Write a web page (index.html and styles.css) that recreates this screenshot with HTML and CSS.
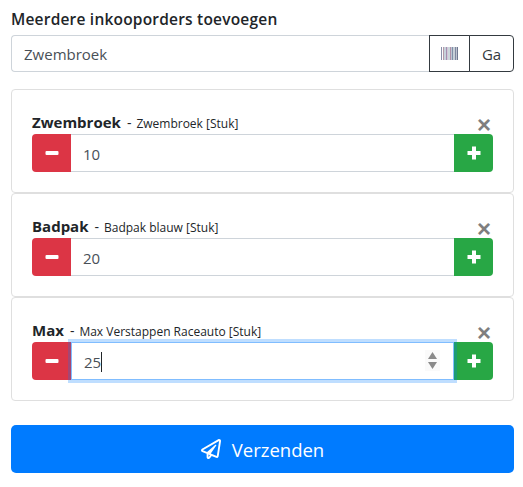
FILE: index.html
```html
<!DOCTYPE html>
<html lang="nl">
<head>
<meta charset="utf-8">
<title>Meerdere inkooporders toevoegen</title>
<link rel="stylesheet" href="styles.css">
</head>
<body>
<form class="page">
  <label class="heading" for="search">Meerdere inkooporders toevoegen</label>
  <div class="search-group">
    <input class="search-input" id="search" value="Zwembroek">
    <button type="button" class="outline-btn barcode-btn" aria-label="Barcode">
      <svg class="barcode" width="17" height="13" viewBox="0 0 17 13">
        <rect x="0" width="1" height="13" fill="#8a8fa8"/><rect x="2" width="1" height="13" fill="#b49aa8"/><rect x="3.5" width="1" height="13" fill="#8fa6b8"/><rect x="5" width="1.5" height="13" fill="#a58fb0"/><rect x="7.5" width="1" height="13" fill="#9ab0b8"/><rect x="9" width="1" height="13" fill="#b090a8"/><rect x="10.5" width="1.5" height="13" fill="#7f8fa8"/><rect x="12.5" width="1" height="13" fill="#90a0b0"/><rect x="14" width="1.5" height="13" fill="#7f88a0"/><rect x="16" width="1" height="13" fill="#6f7890"/>
      </svg>
    </button>
    <button type="button" class="outline-btn ga-btn">Ga</button>
  </div>
  <div class="cards">
    <section class="card">
      <button type="button" class="close" aria-label="Sluiten">&times;</button>
      <div class="title"><strong>Zwembroek</strong><span class="dash">-</span><small>Zwembroek [Stuk]</small></div>
      <div class="qty-group">
        <button type="button" class="step minus" aria-label="Min"><svg width="14" height="14" viewBox="0 0 14 14"><rect x="0.5" y="5" width="13" height="4" rx="1" fill="#fff"/></svg></button>
        <input class="qty" type="text" value="10">
        <button type="button" class="step plus" aria-label="Plus"><svg width="14" height="14" viewBox="0 0 14 14"><path d="M5 0.500h4v4.500h4.500v4h-4.500v4.500h-4v-4.500h-4.500v-4h4.500z" fill="#fff"/></svg></button>
      </div>
    </section>
    <section class="card">
      <button type="button" class="close" aria-label="Sluiten">&times;</button>
      <div class="title"><strong>Badpak</strong><span class="dash">-</span><small>Badpak blauw [Stuk]</small></div>
      <div class="qty-group">
        <button type="button" class="step minus" aria-label="Min"><svg width="14" height="14" viewBox="0 0 14 14"><rect x="0.5" y="5" width="13" height="4" rx="1" fill="#fff"/></svg></button>
        <input class="qty" type="text" value="20">
        <button type="button" class="step plus" aria-label="Plus"><svg width="14" height="14" viewBox="0 0 14 14"><path d="M5 0.500h4v4.500h4.500v4h-4.500v4.500h-4v-4.500h-4.500v-4h4.500z" fill="#fff"/></svg></button>
      </div>
    </section>
    <section class="card">
      <button type="button" class="close" aria-label="Sluiten">&times;</button>
      <div class="title"><strong>Max</strong><span class="dash">-</span><small>Max Verstappen Raceauto [Stuk]</small></div>
      <div class="qty-group">
        <button type="button" class="step minus" aria-label="Min"><svg width="14" height="14" viewBox="0 0 14 14"><rect x="0.5" y="5" width="13" height="4" rx="1" fill="#fff"/></svg></button>
        <div class="qty focused">
          <span class="value">25</span><span class="caret"></span>
          <svg class="spinner" width="15" height="21" viewBox="0 0 15 21"><path d="M7.500 2L12 9H3z" fill="#8a8a8a"/><path d="M7.500 19L3 12H12z" fill="#8a8a8a"/></svg>
        </div>
        <button type="button" class="step plus" aria-label="Plus"><svg width="14" height="14" viewBox="0 0 14 14"><path d="M5 0.500h4v4.500h4.500v4h-4.500v4.500h-4v-4.500h-4.500v-4h4.500z" fill="#fff"/></svg></button>
      </div>
    </section>
  </div>
  <button type="button" class="submit">
    <svg width="20" height="20" viewBox="0 0 512 512"><path fill="#fff" d="M440 6.500L24 246.400c-34.400 19.900-31.100 70.800 5.700 85.900L144 379.600V464c0 46.400 59.200 65.500 86.600 28.600l43.800-59.100 111.900 46.200c5.900 2.400 12.100 3.600 18.300 3.600 8.200 0 16.300-2.100 23.600-6.200 12.800-7.200 21.600-20 23.900-34.500l59.400-387.200c6.100-40.100-36.900-68.800-71.500-48.900zM192 464v-64.600l36.600 15.100L192 464zm212.600-28.700l-153.800-63.500L391 169.500c10.700-15.500-9.500-33.500-23.700-21.200L155.800 332.600 48 288 464 48l-59.400 387.300z"/></svg>
    <span>Verzenden</span>
  </button>
</form>
</body>
</html>
```
FILE: styles.css
```css
* {
  box-sizing: border-box;
}

html, body {
  margin: 0;
  padding: 0;
  background: #fff;
}

body {
  font-family: "Open Sans", "Noto Sans", sans-serif;
  color: #212529;
  font-size: 15px;
}

.page {
  display: flex;
  flex-direction: column;
  width: 523px;
  height: 487px;
  padding: 9px 9px 0 11px;
}

.heading {
  font-size: 15.500px;
  font-weight: 600;
  line-height: 21px;
  height: 26px;
  letter-spacing: 0.200px;
  white-space: nowrap;
}

.search-group {
  display: flex;
  height: 37px;
}

.search-input {
  flex: 1;
  min-width: 0;
  height: 37px;
  border: 1px solid #ced4da;
  border-right: 0;
  border-radius: 4px 0 0 4px;
  padding: 1px 12px 0;
  font: 15px "Open Sans", sans-serif;
  color: #495057;
  outline: 0;
}

.outline-btn {
  height: 37px;
  background: #fff;
  border: 1px solid #343a40;
  color: #343a40;
  font: 15px "Open Sans", sans-serif;
  padding: 0;
  display: flex;
  align-items: center;
  justify-content: center;
}

.barcode-btn {
  width: 41px;
}

.ga-btn {
  width: 45px;
  margin-left: -1px;
  border-radius: 0 4px 4px 0;
}

.cards {
  display: flex;
  flex-direction: column;
  margin-top: 17px;
}

.card {
  position: relative;
  height: 104px;
  border: 1px solid #dfdfdf;
  border-radius: 4px;
  padding: 20px 20px 0;
}

.close {
  position: absolute;
  top: 22px;
  right: 20px;
  width: 18px;
  height: 26px;
  border: 0;
  background: none;
  padding: 0;
  font: bold 24px/26px "Liberation Sans", sans-serif;
  color: #7f7f7f;
}

.title {
  display: flex;
  align-items: baseline;
  height: 24px;
  line-height: 25px;
  white-space: nowrap;
}

.title strong {
  font-size: 15px;
  font-weight: 700;
}

.dash {
  margin: 0 5px 0 6px;
  font-size: 14px;
}

.title small {
  font-size: 12px;
}

.qty-group {
  display: flex;
  height: 38px;
}

.step {
  flex: none;
  width: 39px;
  height: 38px;
  border: 0;
  padding: 0;
  display: flex;
  align-items: center;
  justify-content: center;
  position: relative;
  z-index: 0;
}

.minus {
  background: #dc3545;
  border-radius: 4px 0 0 4px;
}

.plus {
  background: #28a745;
  border-radius: 0 4px 4px 0;
}

.qty {
  flex: 1;
  min-width: 0;
  height: 38px;
  border: 1px solid #ced4da;
  border-left: 0;
  border-right: 0;
  padding: 2px 12px 0;
  font: 15px "Open Sans", sans-serif;
  color: #495057;
  outline: 0;
}

.focused {
  position: relative;
  z-index: 1;
  display: flex;
  align-items: center;
  background: #fff;
  border: 1px solid #80bdff;
  box-shadow: 0 0 0 3px rgba(0, 123, 255, 0.25);
}

.caret {
  width: 1px;
  height: 20px;
  background: #212529;
}

.spinner {
  position: absolute;
  right: 13px;
  top: 7px;
  background: #fafafa;
}

.submit {
  margin-top: 24px;
  height: 48px;
  border: 0;
  border-radius: 5px;
  background: #007bff;
  color: #fff;
  font: 18.500px "Open Sans", sans-serif;
  display: flex;
  align-items: center;
  justify-content: center;
  gap: 11px;
}
```
